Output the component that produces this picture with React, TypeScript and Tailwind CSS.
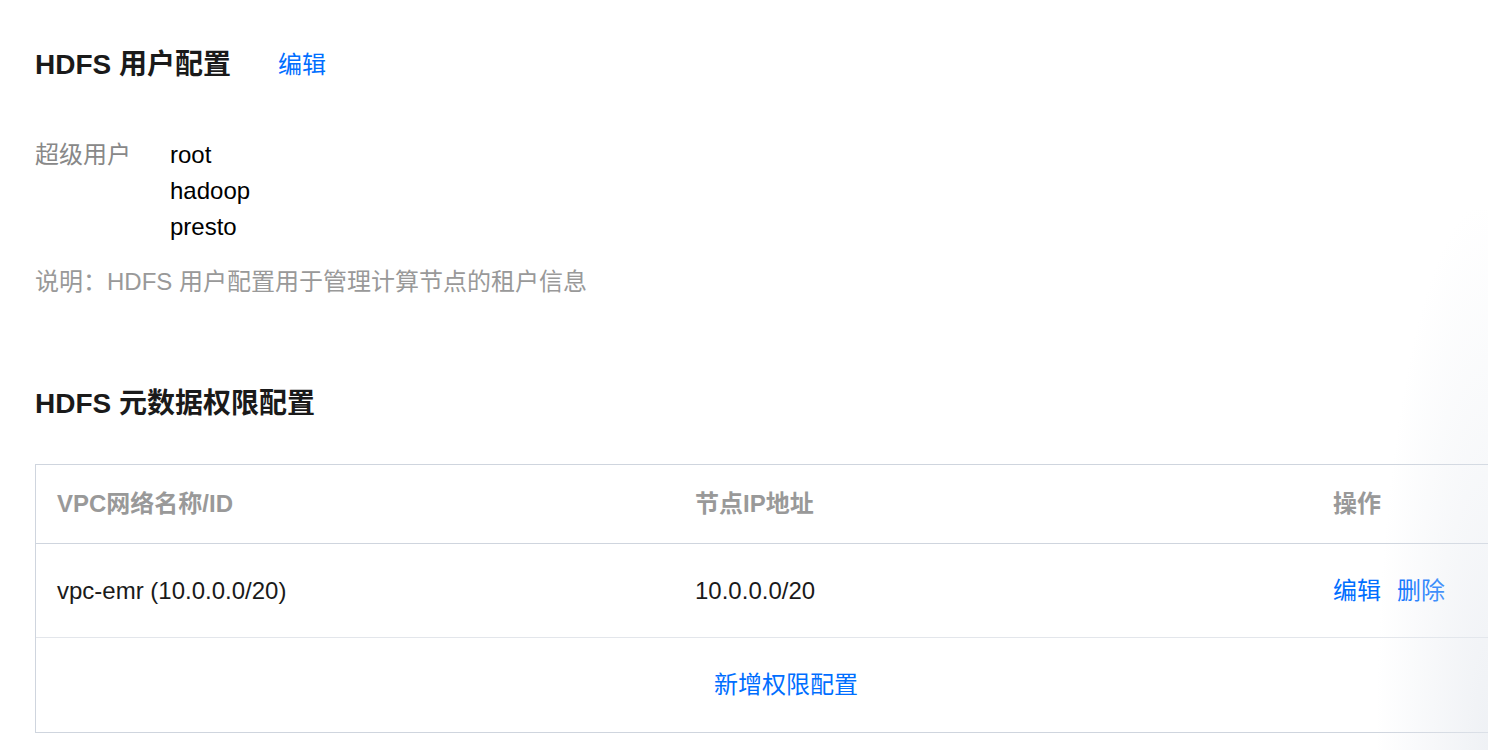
import React from 'react';

const users = ['root', 'hadoop', 'presto'];

const font = "font-['Liberation_Sans','Noto_Sans_CJK_SC',sans-serif]";

export default function App() {
  return (
    <div className={`relative h-[750px] w-[1488px] overflow-hidden bg-white ${font}`}>
      <div className="pl-[35px] pt-[47px]">
        {/* HDFS 用户配置 */}
        <div className="flex h-[36px] items-center">
          <h2 className="text-[28px] font-bold leading-[36px] text-[#1a1a1a]">HDFS 用户配置</h2>
          <a className="ml-[47px] text-[24px] leading-[36px] text-[#006eff]" href="#">
            编辑
          </a>
        </div>

        <div className="mt-[54px] flex">
          <div className="w-[135px] text-[24px] leading-[36px] text-[#888888]">超级用户</div>
          <div className="flex flex-col">
            {users.map((u) => (
              <div key={u} className="text-[24px] leading-[36px] text-black">
                {u}
              </div>
            ))}
          </div>
        </div>

        <p className="mt-[19px] text-[24px] leading-[36px] text-[#999999]">
          说明：HDFS 用户配置用于管理计算节点的租户信息
        </p>

        {/* HDFS 元数据权限配置 */}
        <h2 className="mt-[86px] text-[28px] font-bold leading-[36px] text-[#1a1a1a]">HDFS 元数据权限配置</h2>

        <div className="mt-[42px] w-[1502px] border border-[#cfd5de]">
          <div className="grid h-[79px] grid-cols-[638px_638px_1fr] items-center border-b border-[#cfd5de] pl-[21px] text-[24px] font-bold text-[#999999]">
            <div>VPC网络名称/ID</div>
            <div>节点IP地址</div>
            <div>操作</div>
          </div>
          <div className="grid h-[94px] grid-cols-[638px_638px_1fr] items-center border-b border-[#e3e6eb] pl-[21px] text-[24px] text-[#1a1a1a]">
            <div>vpc-emr (10.0.0.0/20)</div>
            <div>10.0.0.0/20</div>
            <div className="flex gap-[16px] text-[#006eff]">
              <a href="#">编辑</a>
              <a href="#">删除</a>
            </div>
          </div>
          <div className="flex h-[94px] items-center justify-center text-[24px] text-[#006eff]">
            <a href="#">新增权限配置</a>
          </div>
        </div>
      </div>

      {/* soft shadow at the right edge */}
      <div className="pointer-events-none absolute bottom-0 right-0 h-[540px] w-[110px] bg-[radial-gradient(ellipse_at_100%_100%,rgba(228,232,238,0.6)_0%,rgba(255,255,255,0)_72%)]" />
    </div>
  );
}
